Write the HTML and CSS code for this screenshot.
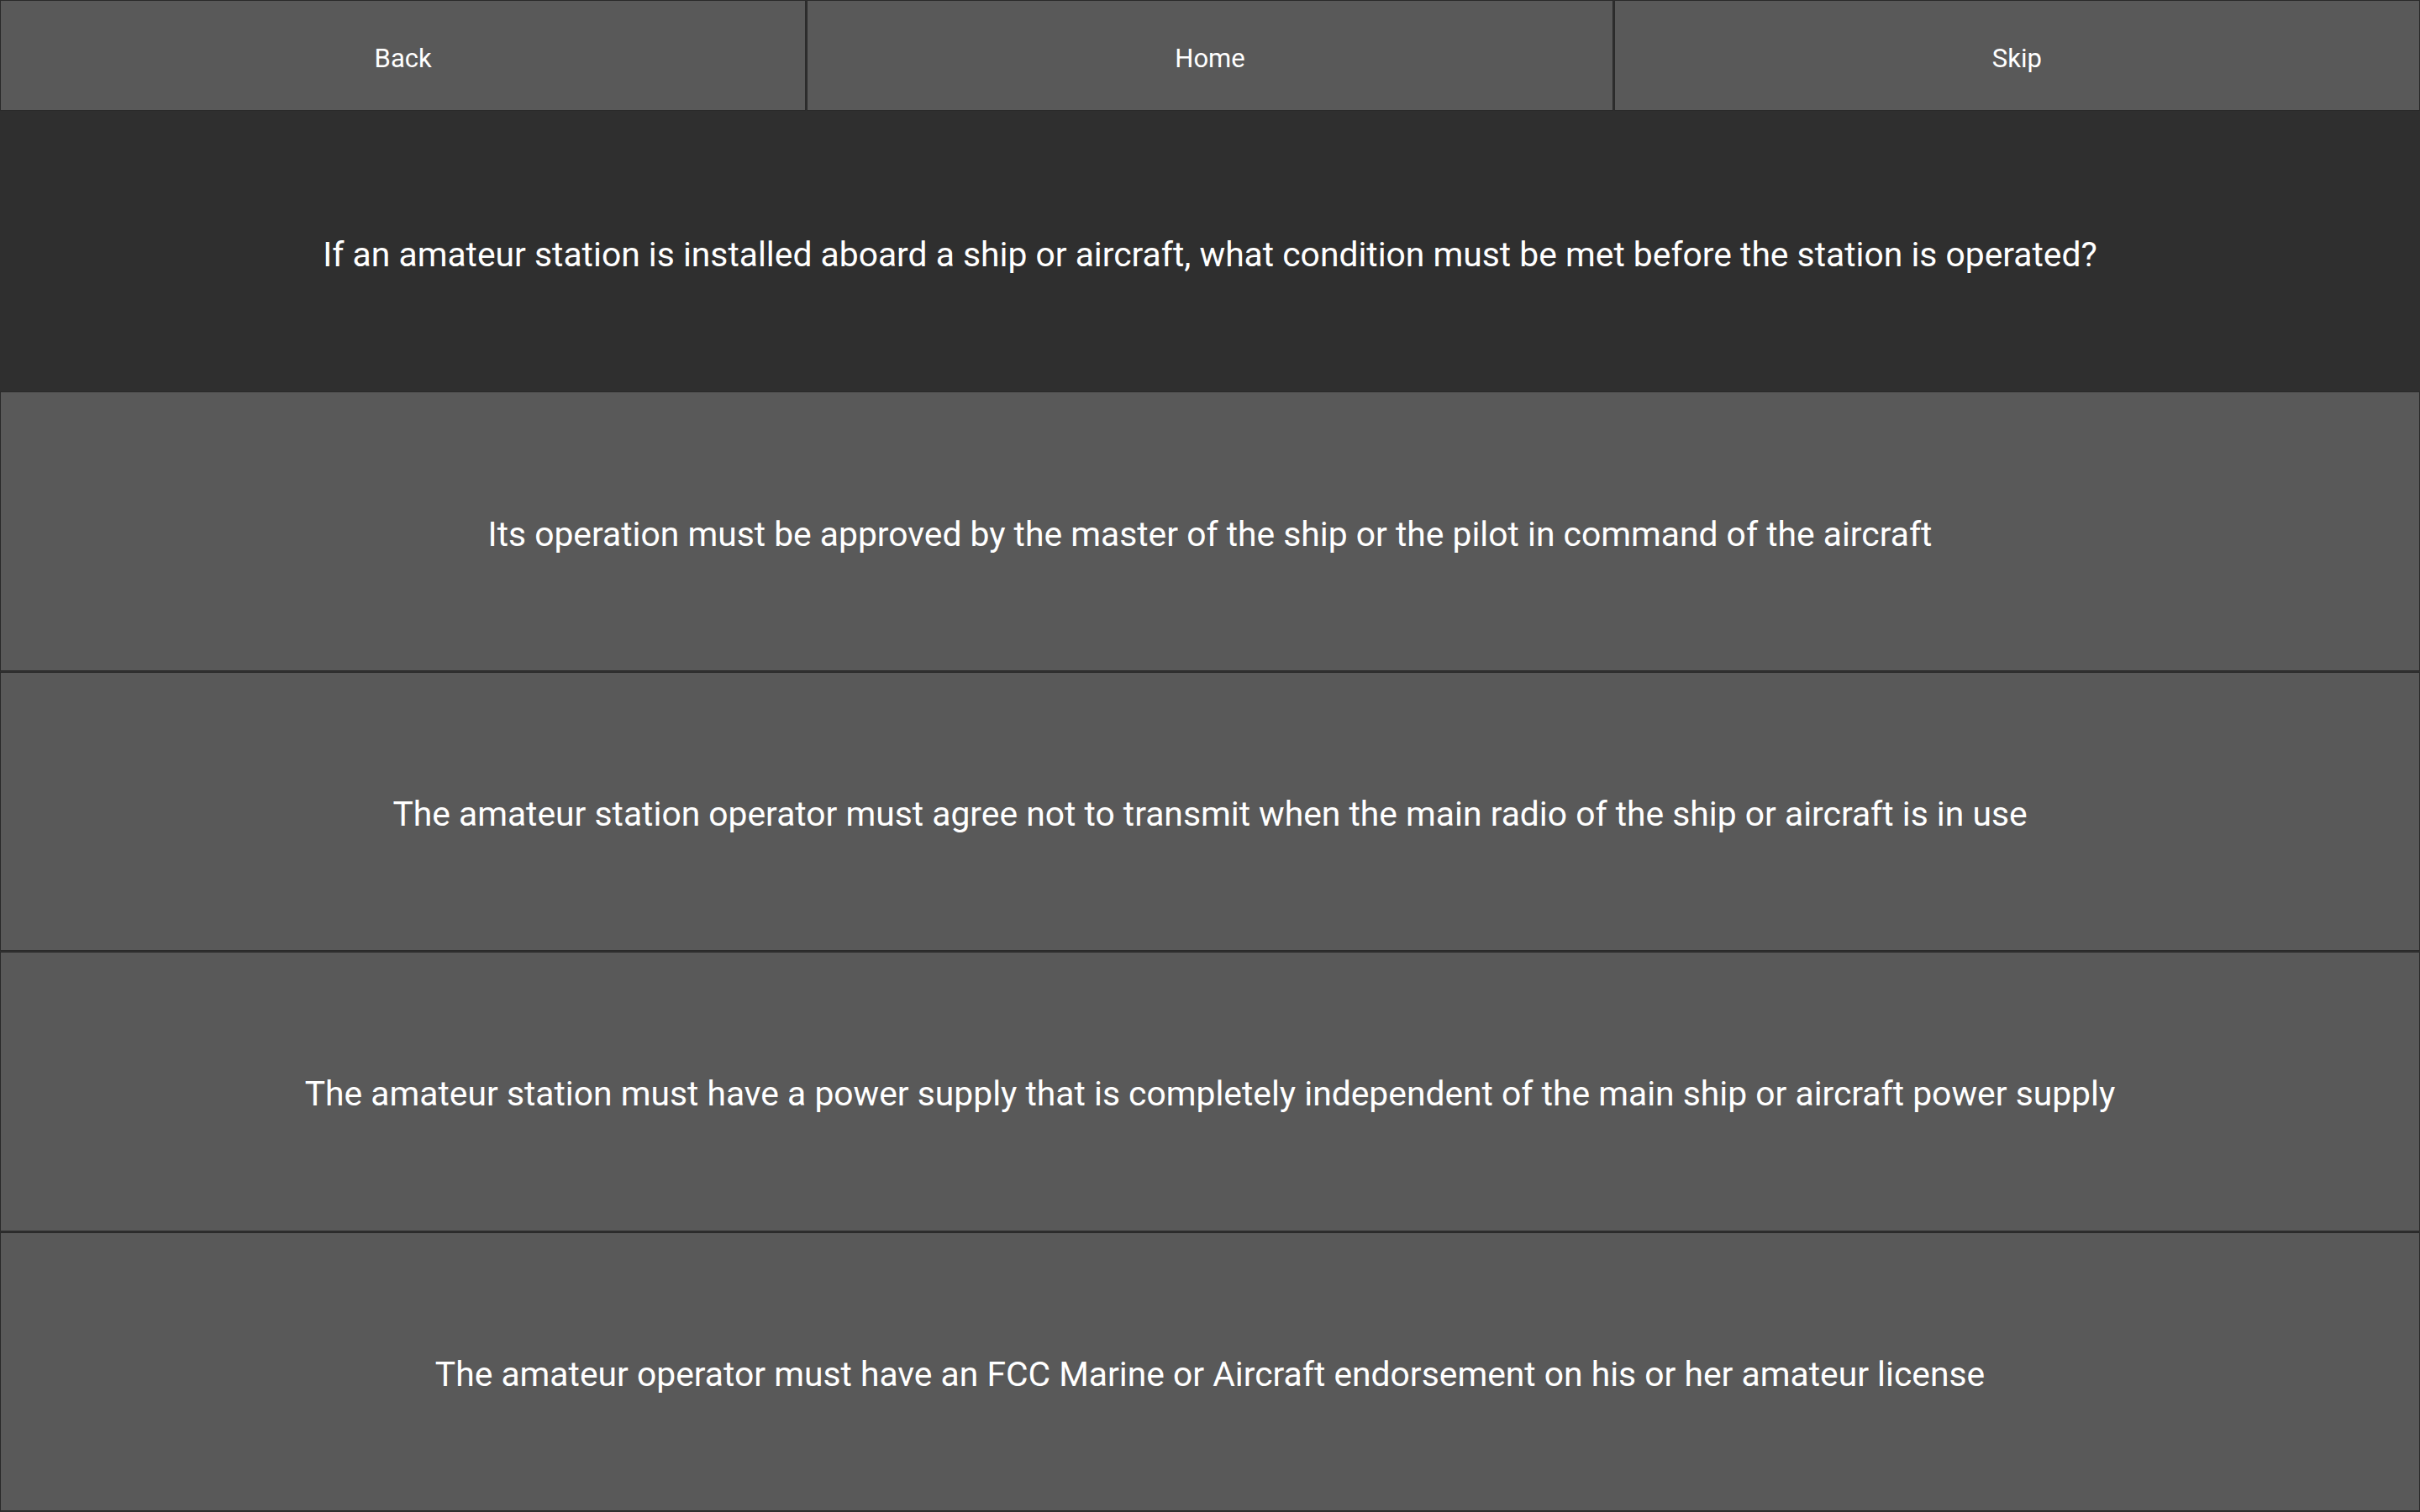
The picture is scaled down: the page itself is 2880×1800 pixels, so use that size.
FILE: index.html
```html
<!DOCTYPE html>
<html lang="en">
<head>
<meta charset="utf-8">
<title>Quiz</title>
<link rel="stylesheet" href="styles.css">
</head>
<body>
<div class="app">
  <div class="nav">
    <div class="btn nav-btn">Back</div>
    <div class="btn nav-btn">Home</div>
    <div class="btn nav-btn">Skip</div>
  </div>
  <div class="question">If an amateur station is installed aboard a ship or aircraft, what condition must be met before the station is operated?</div>
  <div class="btn answer">Its operation must be approved by the master of the ship or the pilot in command of the aircraft</div>
  <div class="btn answer">The amateur station operator must agree not to transmit when the main radio of the ship or aircraft is in use</div>
  <div class="btn answer">The amateur station must have a power supply that is completely independent of the main ship or aircraft power supply</div>
  <div class="btn answer">The amateur operator must have an FCC Marine or Aircraft endorsement on his or her amateur license</div>
</div>
</body>
</html>
```

FILE: styles.css
```css
html, body {
  margin: 0;
  padding: 0;
  height: 100%;
}
body {
  background: #2f2f2f;
  font-family: Roboto, "Liberation Sans", sans-serif;
  color: #ffffff;
}
.app {
  height: 100vh;
  display: grid;
  grid-template-rows: 133px repeat(5, 1fr);
  box-sizing: border-box;
}
.nav {
  display: flex;
  gap: 1px;
  padding-bottom: 1px;
}
.btn {
  background: #595959;
  border: 1px solid #2a2a2a;
  box-sizing: border-box;
  display: flex;
  align-items: center;
  justify-content: center;
  text-align: center;
}
.nav-btn {
  flex: 1;
  font-size: 31px;
  padding-top: 6px;
}
.question {
  display: flex;
  align-items: center;
  justify-content: center;
  text-align: center;
  font-size: 40.8px;
  padding-top: 6px;
  box-sizing: border-box;
  background: #2f2f2f;
}
.answer {
  font-size: 40.8px;
  padding-top: 6px;
  margin-bottom: 1px;
}
```
